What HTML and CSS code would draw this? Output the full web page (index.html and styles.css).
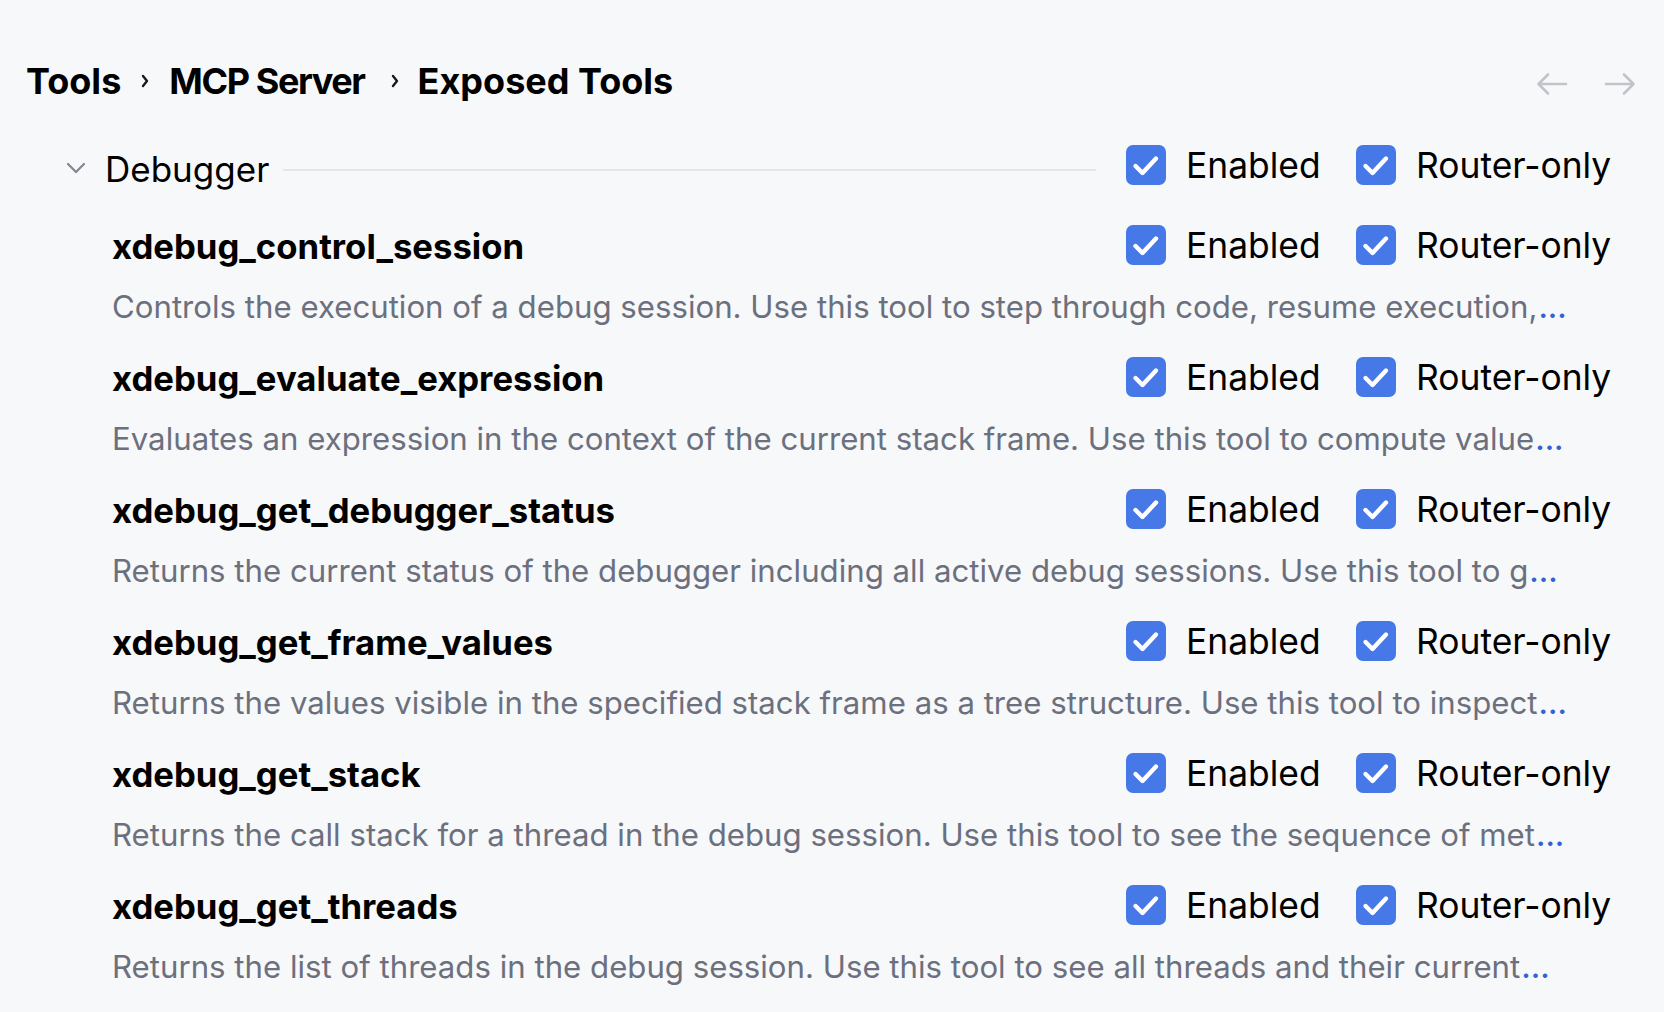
FILE: index.html
```html
<!DOCTYPE html>
<html lang="en">
<head>
<meta charset="utf-8">
<title>Exposed Tools</title>
<link rel="stylesheet" href="styles.css">
</head>
<body>
<div class="page">
  <header class="header">
    <nav class="crumbs">
      <span class="crumb">Tools</span>
      <svg class="sep" viewBox="0 0 8 14" width="8" height="14"><path d="M2 2 L6 7 L2 12" /></svg>
      <span class="crumb crumb-wide">MCP Server</span>
      <svg class="sep" viewBox="0 0 8 14" width="8" height="14"><path d="M2 2 L6 7 L2 12" /></svg>
      <span class="crumb">Exposed Tools</span>
    </nav>
    <div class="nav">
      <svg class="arrow" viewBox="0 0 32 24" width="32" height="24"><path d="M30 12 H3 M12 2.5 L2.5 12 L12 21.5" /></svg>
      <svg class="arrow" viewBox="0 0 32 24" width="32" height="24"><path d="M2 12 H29 M20 2.5 L29.5 12 L20 21.5" /></svg>
    </div>
  </header>

  <section class="group">
    <div class="group-head">
      <svg class="chev" viewBox="0 0 20 12" width="20" height="12"><path d="M2 2 L10 10 L18 2" /></svg>
      <span class="group-title">Debugger</span>
      <span class="rule"></span>
      <div class="controls">
        <label class="check check-first"><span class="box"><svg viewBox="0 0 40 40" width="40" height="40"><path d="M9.5 21 L16.5 28 L30 13.5" /></svg></span><span class="lbl">Enabled</span></label>
        <label class="check"><span class="box"><svg viewBox="0 0 40 40" width="40" height="40"><path d="M9.5 21 L16.5 28 L30 13.5" /></svg></span><span class="lbl">Router-only</span></label>
      </div>
    </div>

    <div class="tool">
      <div class="tool-row">
        <span class="tool-name">xdebug_control_session</span>
        <div class="controls">
          <label class="check check-first"><span class="box"><svg viewBox="0 0 40 40" width="40" height="40"><path d="M9.5 21 L16.5 28 L30 13.5" /></svg></span><span class="lbl">Enabled</span></label>
          <label class="check"><span class="box"><svg viewBox="0 0 40 40" width="40" height="40"><path d="M9.5 21 L16.5 28 L30 13.5" /></svg></span><span class="lbl">Router-only</span></label>
        </div>
      </div>
      <p class="desc">Controls the execution of a debug session. Use this tool to step through code, resume execution,<span class="more">...</span></p>
    </div>

    <div class="tool">
      <div class="tool-row">
        <span class="tool-name">xdebug_evaluate_expression</span>
        <div class="controls">
          <label class="check check-first"><span class="box"><svg viewBox="0 0 40 40" width="40" height="40"><path d="M9.5 21 L16.5 28 L30 13.5" /></svg></span><span class="lbl">Enabled</span></label>
          <label class="check"><span class="box"><svg viewBox="0 0 40 40" width="40" height="40"><path d="M9.5 21 L16.5 28 L30 13.5" /></svg></span><span class="lbl">Router-only</span></label>
        </div>
      </div>
      <p class="desc">Evaluates an expression in the context of the current stack frame. Use this tool to compute value<span class="more">...</span></p>
    </div>

    <div class="tool">
      <div class="tool-row">
        <span class="tool-name">xdebug_get_debugger_status</span>
        <div class="controls">
          <label class="check check-first"><span class="box"><svg viewBox="0 0 40 40" width="40" height="40"><path d="M9.5 21 L16.5 28 L30 13.5" /></svg></span><span class="lbl">Enabled</span></label>
          <label class="check"><span class="box"><svg viewBox="0 0 40 40" width="40" height="40"><path d="M9.5 21 L16.5 28 L30 13.5" /></svg></span><span class="lbl">Router-only</span></label>
        </div>
      </div>
      <p class="desc">Returns the current status of the debugger including all active debug sessions. Use this tool to g<span class="more">...</span></p>
    </div>

    <div class="tool">
      <div class="tool-row">
        <span class="tool-name">xdebug_get_frame_values</span>
        <div class="controls">
          <label class="check check-first"><span class="box"><svg viewBox="0 0 40 40" width="40" height="40"><path d="M9.5 21 L16.5 28 L30 13.5" /></svg></span><span class="lbl">Enabled</span></label>
          <label class="check"><span class="box"><svg viewBox="0 0 40 40" width="40" height="40"><path d="M9.5 21 L16.5 28 L30 13.5" /></svg></span><span class="lbl">Router-only</span></label>
        </div>
      </div>
      <p class="desc">Returns the values visible in the specified stack frame as a tree structure. Use this tool to inspect<span class="more">...</span></p>
    </div>

    <div class="tool">
      <div class="tool-row">
        <span class="tool-name">xdebug_get_stack</span>
        <div class="controls">
          <label class="check check-first"><span class="box"><svg viewBox="0 0 40 40" width="40" height="40"><path d="M9.5 21 L16.5 28 L30 13.5" /></svg></span><span class="lbl">Enabled</span></label>
          <label class="check"><span class="box"><svg viewBox="0 0 40 40" width="40" height="40"><path d="M9.5 21 L16.5 28 L30 13.5" /></svg></span><span class="lbl">Router-only</span></label>
        </div>
      </div>
      <p class="desc">Returns the call stack for a thread in the debug session. Use this tool to see the sequence of met<span class="more">...</span></p>
    </div>

    <div class="tool">
      <div class="tool-row">
        <span class="tool-name">xdebug_get_threads</span>
        <div class="controls">
          <label class="check check-first"><span class="box"><svg viewBox="0 0 40 40" width="40" height="40"><path d="M9.5 21 L16.5 28 L30 13.5" /></svg></span><span class="lbl">Enabled</span></label>
          <label class="check"><span class="box"><svg viewBox="0 0 40 40" width="40" height="40"><path d="M9.5 21 L16.5 28 L30 13.5" /></svg></span><span class="lbl">Router-only</span></label>
        </div>
      </div>
      <p class="desc">Returns the list of threads in the debug session. Use this tool to see all threads and their current<span class="more">...</span></p>
    </div>
  </section>
</div>
</body>
</html>
```

FILE: styles.css
```css
* { box-sizing: border-box; }
html, body {
  margin: 0;
  padding: 0;
  background: #f7f8fa;
}
body {
  font-family: Inter, "Noto Sans", "Liberation Sans", sans-serif;
  color: #000;
  width: 1664px;
  height: 1012px;
  overflow: hidden;
}
.page {
  padding-top: 59px;
}
.header {
  display: flex;
  align-items: center;
  height: 44px;
  padding-left: 26px;
  padding-right: 28px;
}
.crumbs {
  display: flex;
  align-items: center;
  font-size: 36px;
  font-weight: 700;
  line-height: 44px;
}
.crumb-wide {
  letter-spacing: -1.4px;
  margin-right: 4px;
}
.sep {
  margin: 0 20px 0 20px;
  fill: none;
  stroke: #1a1a1a;
  stroke-width: 2.4;
  stroke-linecap: round;
  stroke-linejoin: round;
}
.crumb-wide + .sep { margin-left: 22px; margin-right: 19px; }
.nav {
  margin-left: auto;
  display: flex;
  gap: 36px;
  padding-top: 6px;
}
.arrow {
  fill: none;
  stroke: #c2c4c9;
  stroke-width: 2.6;
  stroke-linecap: round;
  stroke-linejoin: round;
}
.group {
  margin-top: 42px;
}
.group-head {
  display: flex;
  align-items: center;
  height: 40px;
  padding-left: 66px;
}
.chev {
  fill: none;
  stroke: #818594;
  stroke-width: 2.2;
  stroke-linecap: round;
  stroke-linejoin: round;
  margin-top: 6px;
}
.group-title {
  margin-left: 19px;
  font-size: 35px;
  line-height: 40px;
  padding-top: 8px;
}
.rule {
  flex: 1;
  height: 2px;
  background: #e5e6ea;
  margin: 9px 30px 0 14px;
}
.controls {
  display: flex;
  align-items: center;
  width: 538px;
  flex: none;
}
.check {
  display: flex;
  align-items: center;
  gap: 20px;
}
.check-first { width: 230px; }
.box {
  width: 40px;
  height: 40px;
  border-radius: 7px;
  background: #4778e8;
  display: block;
  flex: none;
}
.box svg {
  display: block;
  fill: none;
  stroke: #fff;
  stroke-width: 4.4;
  stroke-linecap: round;
  stroke-linejoin: round;
}
.lbl {
  font-size: 35.4px;
  line-height: 40px;
  padding-top: 2px;
}
.tool {
  padding-left: 112px;
  margin-top: 40px;
}
.tool + .tool { margin-top: 30px; }
.tool-row {
  display: flex;
  align-items: center;
  height: 40px;
}
.tool-name {
  flex: 1;
  font-size: 34.7px;
  font-weight: 700;
  line-height: 40px;
  padding-top: 1px;
}
.desc {
  margin: 22px 0 0;
  font-size: 31.2px;
  line-height: 40px;
  color: #6c707e;
  white-space: nowrap;
}
.more {
  color: #3363d3;
  font-weight: 500;
  margin-left: 1px;
}
```
